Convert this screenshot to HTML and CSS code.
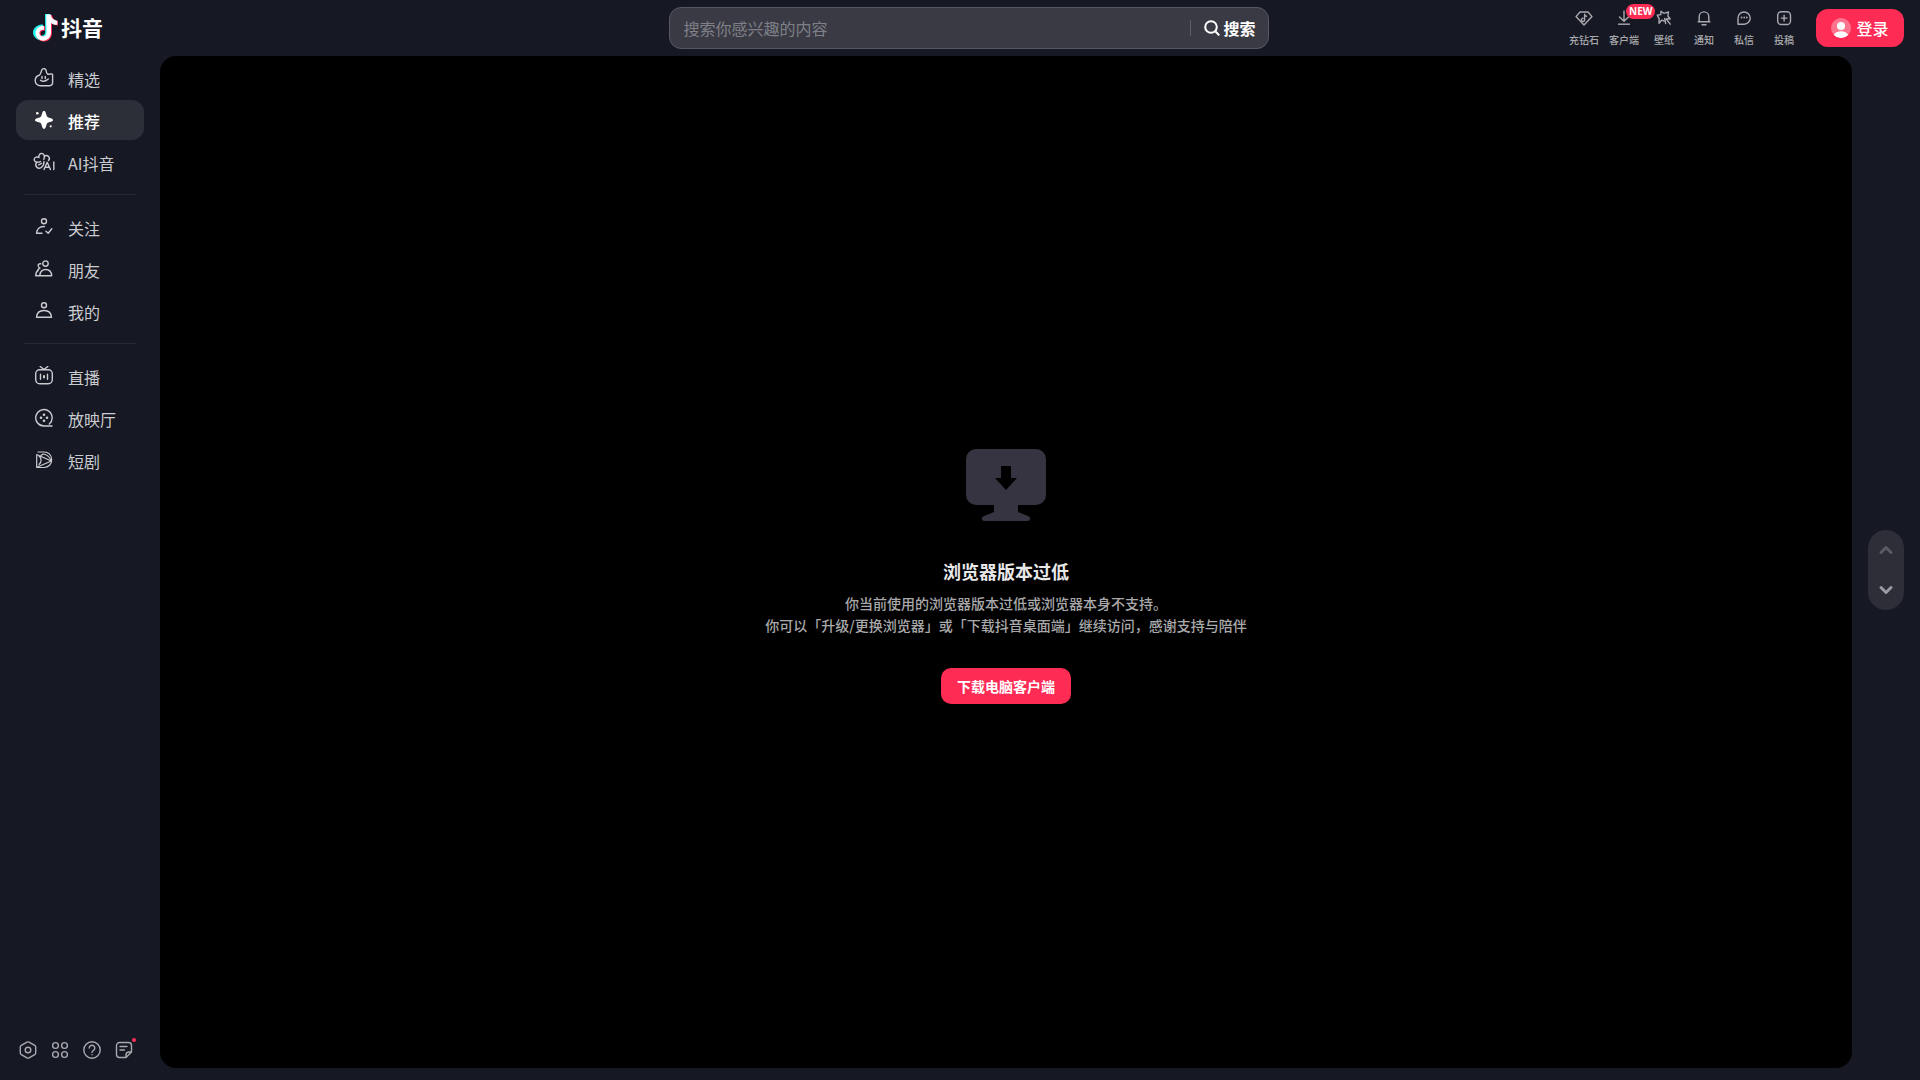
FILE: index.html
```html
<!DOCTYPE html>
<html lang="zh-CN">
<head>
<meta charset="utf-8">
<meta name="viewport" content="width=device-width, initial-scale=1">
<title>抖音</title>
<link rel="stylesheet" href="styles.css">
</head>
<body>
<div class="app">
  <header class="header">
    <a class="logo" href="#">
      <svg width="28" height="30" viewBox="0 0 28 30" aria-hidden="true">
        <path fill="#25f4ee" d="M12 1h5c.5 3.500 2.500 5.700 6 6v4.500c-2.300 0-4.300-.7-6-1.900v9.400c0 5-3.600 8.500-8 8.500S0 24 0 19.500s5-8.500 10-7.800v4.700c-2.400-.6-4.400.7-4.400 2.800 0 1.900 1.500 3.300 3.300 3.300 2 0 3.300-1.400 3.300-3.800z"/>
        <path fill="#fe2c55" transform="translate(2 1)" d="M12 1h5c.5 3.500 2.500 5.700 6 6v4.500c-2.300 0-4.300-.7-6-1.900v9.400c0 5-3.600 8.500-8 8.500S1 24 1 19.500s4-8.200 9-7.500v4.700c-2.400-.6-4.400.7-4.400 2.800 0 1.900 1.500 3.300 3.300 3.300 2 0 3.300-1.400 3.300-3.800z"/>
        <path fill="#fff" transform="translate(1.200 .5)" d="M12 1h4.600c.5 3.500 2.900 5.900 6.400 6.200v4.100c-2.300 0-4.500-.7-6.200-1.900v9.600c0 4.800-3.500 8.200-7.800 8.200S1.400 23.700 1.400 19.500 5 12.300 9.700 12.300v4.100c-2.700-.4-4.500 1-4.500 3.100 0 2 1.600 3.600 3.600 3.600 2.200 0 3.500-1.500 3.500-4.100z"/>
      </svg>
      <span class="logo-text">抖音</span>
    </a>
    <form class="search" role="search">
      <input class="search-input" type="text" placeholder="搜索你感兴趣的内容" aria-label="搜索">
      <button class="search-button" type="button">
        <svg width="18" height="18" viewBox="0 0 18 18" fill="none" stroke="currentColor" stroke-width="2" stroke-linecap="round" aria-hidden="true"><circle cx="8" cy="8" r="5.800"/><path d="M12.300 12.300l3.400 3.400"/></svg>
        <span>搜索</span>
      </button>
    </form>
    <div class="actions">
      <nav class="quick">
        <a class="quick-item" href="#">
          <svg class="icon" viewBox="0 0 20 20" aria-hidden="true"><path d="M6 4h8l4 4.600L10 17 2 8.600z"/><path d="M10.600 6.200v5.600a1.600 1.600 0 1 1-1.600-1.500M10.600 6.500c.3 1.200 1 1.700 2 1.800"/></svg>
          <span>充钻石</span>
        </a>
        <a class="quick-item" href="#">
          <svg class="icon" viewBox="0 0 20 20" aria-hidden="true"><path d="M10 3v10M5.500 9l4.500 4.300L14.500 9"/><path stroke-linecap="butt" d="M4 16.200h12"/></svg>
          <span>客户端</span>
          <b class="badge">NEW</b>
        </a>
        <a class="quick-item" href="#">
          <svg class="icon" viewBox="0 0 20 20" aria-hidden="true"><path d="M10.200 13L7.700 12.200 5 15.200l.2-4.400L3.200 7.200l3.600-.6L7 3.300l2.800 2L14.500 4l-.6 4 2.300 3-3.400-.2"/><path d="M10.700 10.500l1 5M12.300 11l3.900 5.200"/></svg>
          <span>壁纸</span>
        </a>
        <a class="quick-item" href="#">
          <svg class="icon" viewBox="0 0 20 20" aria-hidden="true"><path d="M5.200 13V8.700a4.800 4.800 0 0 1 9.600 0V13l1 .8H4.200z"/><path d="M8 16.700h4"/></svg>
          <span>通知</span>
        </a>
        <a class="quick-item" href="#">
          <svg class="icon" viewBox="0 0 20 20" aria-hidden="true"><path d="M4 16.200v-6A6.100 6.100 0 1 1 10.200 16.200z"/><path stroke-width="1.800" d="M7.600 9.500h.01M10.200 9.500h.01M12.800 9.500h.01"/></svg>
          <span>私信</span>
        </a>
        <a class="quick-item" href="#">
          <svg class="icon" viewBox="0 0 20 20" aria-hidden="true"><rect x="3.700" y="3.700" width="12.800" height="12.800" rx="3.600"/><path d="M10.100 7.200v5.800M7.200 10.100h5.800"/></svg>
          <span>投稿</span>
        </a>
      </nav>
      <button class="login" type="button">
        <svg width="20" height="20" viewBox="0 0 20 20" aria-hidden="true"><circle cx="10" cy="10" r="10" fill="#fff" fill-opacity=".34"/><circle cx="10" cy="8" r="4" fill="#fff"/><path fill="#fff" d="M2.800 17c1.200-2.500 4-3.700 7.200-3.700s6 1.200 7.200 3.700A10 10 0 0 1 10 20a10 10 0 0 1-7.200-3z"/></svg>
        <span>登录</span>
      </button>
    </div>
  </header>

  <div class="body">
    <aside class="sidebar">
      <nav class="menu">
        <a class="menu-item" href="#">
          <svg class="icon" viewBox="0 0 20 20" aria-hidden="true"><path d="M5.300 7.200C7.200 6 6.800 3.500 8 1.700 9.200-.2 12 .6 12.200 2.800c.1 1.700.2 2.700 1.400 3.400C15.800 6.600 17.500 5 18.600 6.500V15a3 3 0 0 1-3 2.700H6.500c-3 0-5.300-2-5.300-5C1.200 9.900 2.800 7.800 5.300 7.200z"/><path d="M8 8.500v2M11.300 8.500v2M6.500 12.200c2.200 1.800 4.800 1.500 7.800-1.200"/></svg>
          <span>精选</span>
        </a>
        <a class="menu-item active" href="#" aria-current="page">
          <svg class="icon" viewBox="0 0 20 20" aria-hidden="true"><g fill="currentColor" stroke="none"><path d="M10 1c.8 0 1.300.5 1.600 1.400l1 3.200c.3 1 .8 1.500 1.800 1.800l3.200 1c1.900.6 1.900 2.600 0 3.200l-3.200 1c-1 .3-1.500.8-1.800 1.800l-1 3.200c-.6 1.900-2.600 1.900-3.200 0l-1-3.200c-.3-1-.8-1.500-1.800-1.800l-3.200-1c-1.900-.6-1.900-2.600 0-3.200l3.200-1c1-.3 1.500-.8 1.800-1.800l1-3.200C8.700 1.500 9.200 1 10 1z"/><circle cx="3.300" cy="3.300" r="1.300"/><circle cx="16.700" cy="16.300" r="1.100"/></g></svg>
          <span>推荐</span>
        </a>
        <a class="menu-item" href="#">
          <svg class="icon" viewBox="0 0 24 20" aria-hidden="true"><path d="M7 5.500C6 .5 12 0 12.300 4.500c3.200-2.500 6.700 1 4.200 4M7 5.500C2.500 3.200.3 8.800 4.300 10M4.300 10c1.700.5 3 .2 4.200-.5M4.500 10.300c-2.300 4 1.500 7.500 4.700 5.200 2-1.500 2.900-3.500 2.800-6M6.500 13l3-1.700M11.800 7.300l.6-2.500"/><path d="M12 17.500l3.200-7.200 3.200 7.200M13.200 15.200h4M21.800 10v7.500"/></svg>
          <span>AI抖音</span>
        </a>
        <hr class="divider">
        <a class="menu-item" href="#">
          <svg class="icon" viewBox="0 0 20 20" aria-hidden="true"><circle cx="10" cy="4.300" r="2.500"/><path d="M10.500 9.600C6 9.100 3 12 2.500 16.300H8M12 14.200l2.200 2 3.600-4.400"/></svg>
          <span>关注</span>
        </a>
        <a class="menu-item" href="#">
          <svg class="icon" viewBox="0 0 20 20" aria-hidden="true"><circle cx="11.500" cy="4.600" r="2.700"/><path d="M5.800 16.700c.3-4 2.500-6.200 5.900-6.200s5.700 2.200 6 6.200H1.700c.1-2.700 1-4.400 2.500-5.300M6.700 4.800c-3.200-.4-3.300 3.300-.7 4.300-1.500.6-2 1.300-2.500 2.500"/></svg>
          <span>朋友</span>
        </a>
        <a class="menu-item" href="#">
          <svg class="icon" viewBox="0 0 20 20" aria-hidden="true"><circle cx="10" cy="4.300" r="2.500"/><path d="M2.500 16.300c.3-4.300 3.200-6.800 7.500-6.800s7.200 2.500 7.500 6.800z"/></svg>
          <span>我的</span>
        </a>
        <hr class="divider">
        <a class="menu-item" href="#">
          <svg class="icon" viewBox="0 0 20 20" aria-hidden="true"><rect x="1.700" y="3.800" width="16.600" height="14" rx="4"/><path d="M6.200.500l3.800 3L13.800.500M6.500 8.300v5M13.500 8.300v5"/><path stroke-width="2" d="M10 10v1.500"/></svg>
          <span>直播</span>
        </a>
        <a class="menu-item" href="#">
          <svg class="icon" viewBox="0 0 20 20" aria-hidden="true"><path d="M18 18H10a8.200 8.200 0 1 1 5.300-2"/><g fill="currentColor" stroke="none"><circle cx="10" cy="6.700" r="1.300"/><circle cx="10" cy="12.700" r="1.300"/><circle cx="7" cy="9.700" r="1.300"/><circle cx="13" cy="9.700" r="1.300"/></g></svg>
          <span>放映厅</span>
        </a>
        <a class="menu-item" href="#">
          <svg class="icon" viewBox="0 0 20 20" aria-hidden="true"><path stroke-width="1.200" d="M4 2h6c4.500 0 7.700 3.200 7.700 7.700S14.500 17.500 10 17.500H2.700V4.500L17.300 11 3.500 17M5 6c2.800 2.500 2.800 6 0 8.500M7 5.500L9 4c3.500.3 6 2.500 8 6"/></svg>
          <span>短剧</span>
        </a>
      </nav>
      <div class="tools">
        <button class="tool" type="button" aria-label="设置"><svg class="icon" viewBox="0 0 20 20" aria-hidden="true"><path d="M9 2.200a2 2 0 0 1 2 0l5.700 3.200a2 2 0 0 1 1 1.700v5.800a2 2 0 0 1-1 1.700L11 17.800a2 2 0 0 1-2 0l-5.700-3.200a2 2 0 0 1-1-1.700V7.100a2 2 0 0 1 1-1.700z"/><circle cx="10" cy="10" r="2.800"/></svg></button>
        <button class="tool" type="button" aria-label="更多"><svg class="icon" viewBox="0 0 20 20" aria-hidden="true"><circle cx="5.500" cy="5.500" r="2.900"/><circle cx="14.500" cy="5.500" r="2.900"/><circle cx="5.500" cy="14.500" r="2.900"/><circle cx="14.500" cy="14.500" r="2.900"/></svg></button>
        <button class="tool" type="button" aria-label="帮助"><svg class="icon" viewBox="0 0 20 20" aria-hidden="true"><circle cx="10" cy="10" r="8.200"/><path d="M7.200 8a2.800 2.800 0 1 1 4.300 2.400c-1 .7-1.500 1-1.500 2M10 14.700v.1"/></svg></button>
        <button class="tool" type="button" aria-label="反馈"><svg class="icon" viewBox="0 0 20 20" aria-hidden="true"><path d="M17.500 12V5.500a3 3 0 0 0-3-3h-9a3 3 0 0 0-3 3v9a3 3 0 0 0 3 3H12zM12 17.500V15a3 3 0 0 1 3-3h2.500M6 6.500h7M6 10h4.500"/></svg><i class="dot"></i></button>
      </div>
    </aside>

    <main class="player">
      <section class="notice">
        <svg width="80" height="72" viewBox="0 0 80 72" aria-hidden="true"><path fill="#353440" fill-rule="evenodd" d="M10 0h60a10 10 0 0 1 10 10v36a10 10 0 0 1-10 10H52v7l10.500 4.300c2.500 1.200 2 4.700-.8 4.700H18.300c-2.800 0-3.300-3.500-.8-4.700L28 63v-7H10A10 10 0 0 1 0 46V10A10 10 0 0 1 10 0zM35 17v12h-6l11 12 11-12h-6V17z"/></svg>
        <h1 class="notice-title">浏览器版本过低</h1>
        <p class="notice-text">你当前使用的浏览器版本过低或浏览器本身不支持。<br>你可以「升级/更换浏览器」或「下载抖音桌面端」继续访问，感谢支持与陪伴</p>
        <button class="download" type="button">下载电脑客户端</button>
      </section>
    </main>

    <div class="rail">
      <div class="pager">
        <button class="pager-button muted" type="button" aria-label="上一个"><svg width="16" height="16" viewBox="0 0 16 16" aria-hidden="true"><path d="M3 10.500l5-5 5 5"/></svg></button>
        <button class="pager-button" type="button" aria-label="下一个"><svg width="16" height="16" viewBox="0 0 16 16" aria-hidden="true"><path d="M3 5.500l5 5 5-5"/></svg></button>
      </div>
    </div>
  </div>
</div>
</body>
</html>
```
FILE: styles.css
```css
* {
  box-sizing: border-box;
}

body {
  margin: 0;
  background: #161823;
  color: #fff;
  font-family: "Noto Sans CJK SC", "Noto Sans", sans-serif;
}

button,
input {
  margin: 0;
  padding: 0;
  border: 0;
  background: none;
  color: inherit;
  font: inherit;
}

button {
  cursor: pointer;
}

a {
  color: inherit;
  text-decoration: none;
}

svg {
  display: block;
  flex: none;
}

.icon {
  height: 20px;
  fill: none;
  stroke: currentColor;
  stroke-width: 1.4;
  stroke-linecap: round;
  stroke-linejoin: round;
}

.app {
  display: flex;
  flex-direction: column;
  min-height: 100vh;
}

/* Header */
.header {
  display: grid;
  grid-template-columns: minmax(0, 1fr) minmax(0, 600px) minmax(0, 1fr);
  align-items: center;
  height: 56px;
  padding: 0 16px 0 33px;
}

.logo {
  display: flex;
  align-items: center;
  justify-self: start;
}

.logo-text {
  font-size: 21px;
  font-weight: 700;
  line-height: 26px;
  padding-bottom: 2px;
}

.search {
  display: flex;
  align-items: center;
  height: 42px;
  border: 1px solid #575861;
  border-radius: 12px;
  background: #393a44;
}

.search-input {
  flex: 1;
  min-width: 0;
  height: 40px;
  padding: 0 14px;
  font-size: 16px;
  outline: none;
}

.search-input::placeholder {
  color: #7f8087;
  opacity: 1;
}

.search-button {
  display: flex;
  align-items: center;
  gap: 2px;
  padding: 0 12px;
  font-size: 16px;
  font-weight: 700;
  line-height: 24px;
}

.search-button::before {
  content: "";
  width: 1px;
  height: 16px;
  margin-right: 10px;
  background: #5c5d66;
}

.actions {
  display: flex;
  align-items: center;
  justify-content: flex-end;
  gap: 12px;
}

.quick {
  display: flex;
}

.quick-item {
  position: relative;
  display: flex;
  flex-direction: column;
  align-items: center;
  gap: 4px;
  width: 40px;
  color: #a9aaae;
  font-size: 10px;
  font-weight: 500;
  line-height: 16px;
}

.badge {
  position: absolute;
  top: -4px;
  left: 22px;
  padding: 0 3px;
  border-radius: 8px;
  background: #fe2c55;
  color: #fff;
  font-family: "Noto Sans", sans-serif;
  font-size: 10px;
  line-height: 15px;
}

.login {
  display: flex;
  align-items: center;
  justify-content: center;
  gap: 5px;
  width: 88px;
  height: 38px;
  border-radius: 12px;
  background: #fe2c55;
  font-size: 16px;
  font-weight: 500;
}

/* Body */
.body {
  display: flex;
  flex: 1;
  padding-bottom: 12px;
}

.sidebar {
  display: flex;
  flex-direction: column;
  justify-content: space-between;
  width: 160px;
  padding: 2px 16px 0;
}

.menu {
  display: flex;
  flex-direction: column;
  gap: 2px;
}

.menu-item {
  display: flex;
  align-items: center;
  height: 40px;
  border-radius: 12px;
  color: #cbccd0;
  font-size: 16px;
  line-height: 24px;
}

.menu-item .icon {
  width: 24px;
  margin: 0 12px 0 16px;
}

.menu-item span {
  padding-top: 2px;
}

.menu-item.active {
  background: #2d2f38;
  color: #fff;
  font-weight: 500;
}

.divider {
  width: 112px;
  height: 1px;
  margin: 10px auto;
  border: 0;
  background: #262832;
}

.tools {
  display: flex;
  gap: 12px;
  padding-left: 2px;
  padding-bottom: 8px;
}

.tool {
  position: relative;
  width: 20px;
  height: 20px;
  color: #a9aaae;
}

.dot {
  position: absolute;
  top: -2px;
  right: -2px;
  width: 4px;
  height: 4px;
  border-radius: 2px;
  background: #fe2c55;
}

.player {
  display: flex;
  flex: 1;
  align-items: center;
  justify-content: center;
  padding-top: 28px;
  border-radius: 16px;
  background: #000;
}

.notice {
  display: flex;
  flex-direction: column;
  align-items: center;
  text-align: center;
}

.notice-title {
  margin: 37px 0 8px;
  color: #e8e8e9;
  font-size: 18px;
  font-weight: 700;
  line-height: 26px;
}

.notice-text {
  margin: 0 0 32px;
  color: #a9a9ab;
  font-size: 14px;
  font-weight: 500;
  line-height: 22px;
}

.download {
  height: 36px;
  padding: 0 16px;
  border-radius: 10px;
  background: #fe2c55;
  font-size: 14px;
  font-weight: 700;
}

.rail {
  display: flex;
  align-items: center;
  padding: 16px 16px 0;
}

.pager {
  display: flex;
  flex-direction: column;
  width: 36px;
  border-radius: 18px;
  background: #2d2e38;
}

.pager-button {
  display: grid;
  place-items: center;
  height: 40px;
  color: #9a9ba0;
}

.pager-button.muted {
  color: #5a5b63;
}

.pager-button path {
  fill: none;
  stroke: currentColor;
  stroke-width: 3;
  stroke-linecap: round;
  stroke-linejoin: round;
}
```
